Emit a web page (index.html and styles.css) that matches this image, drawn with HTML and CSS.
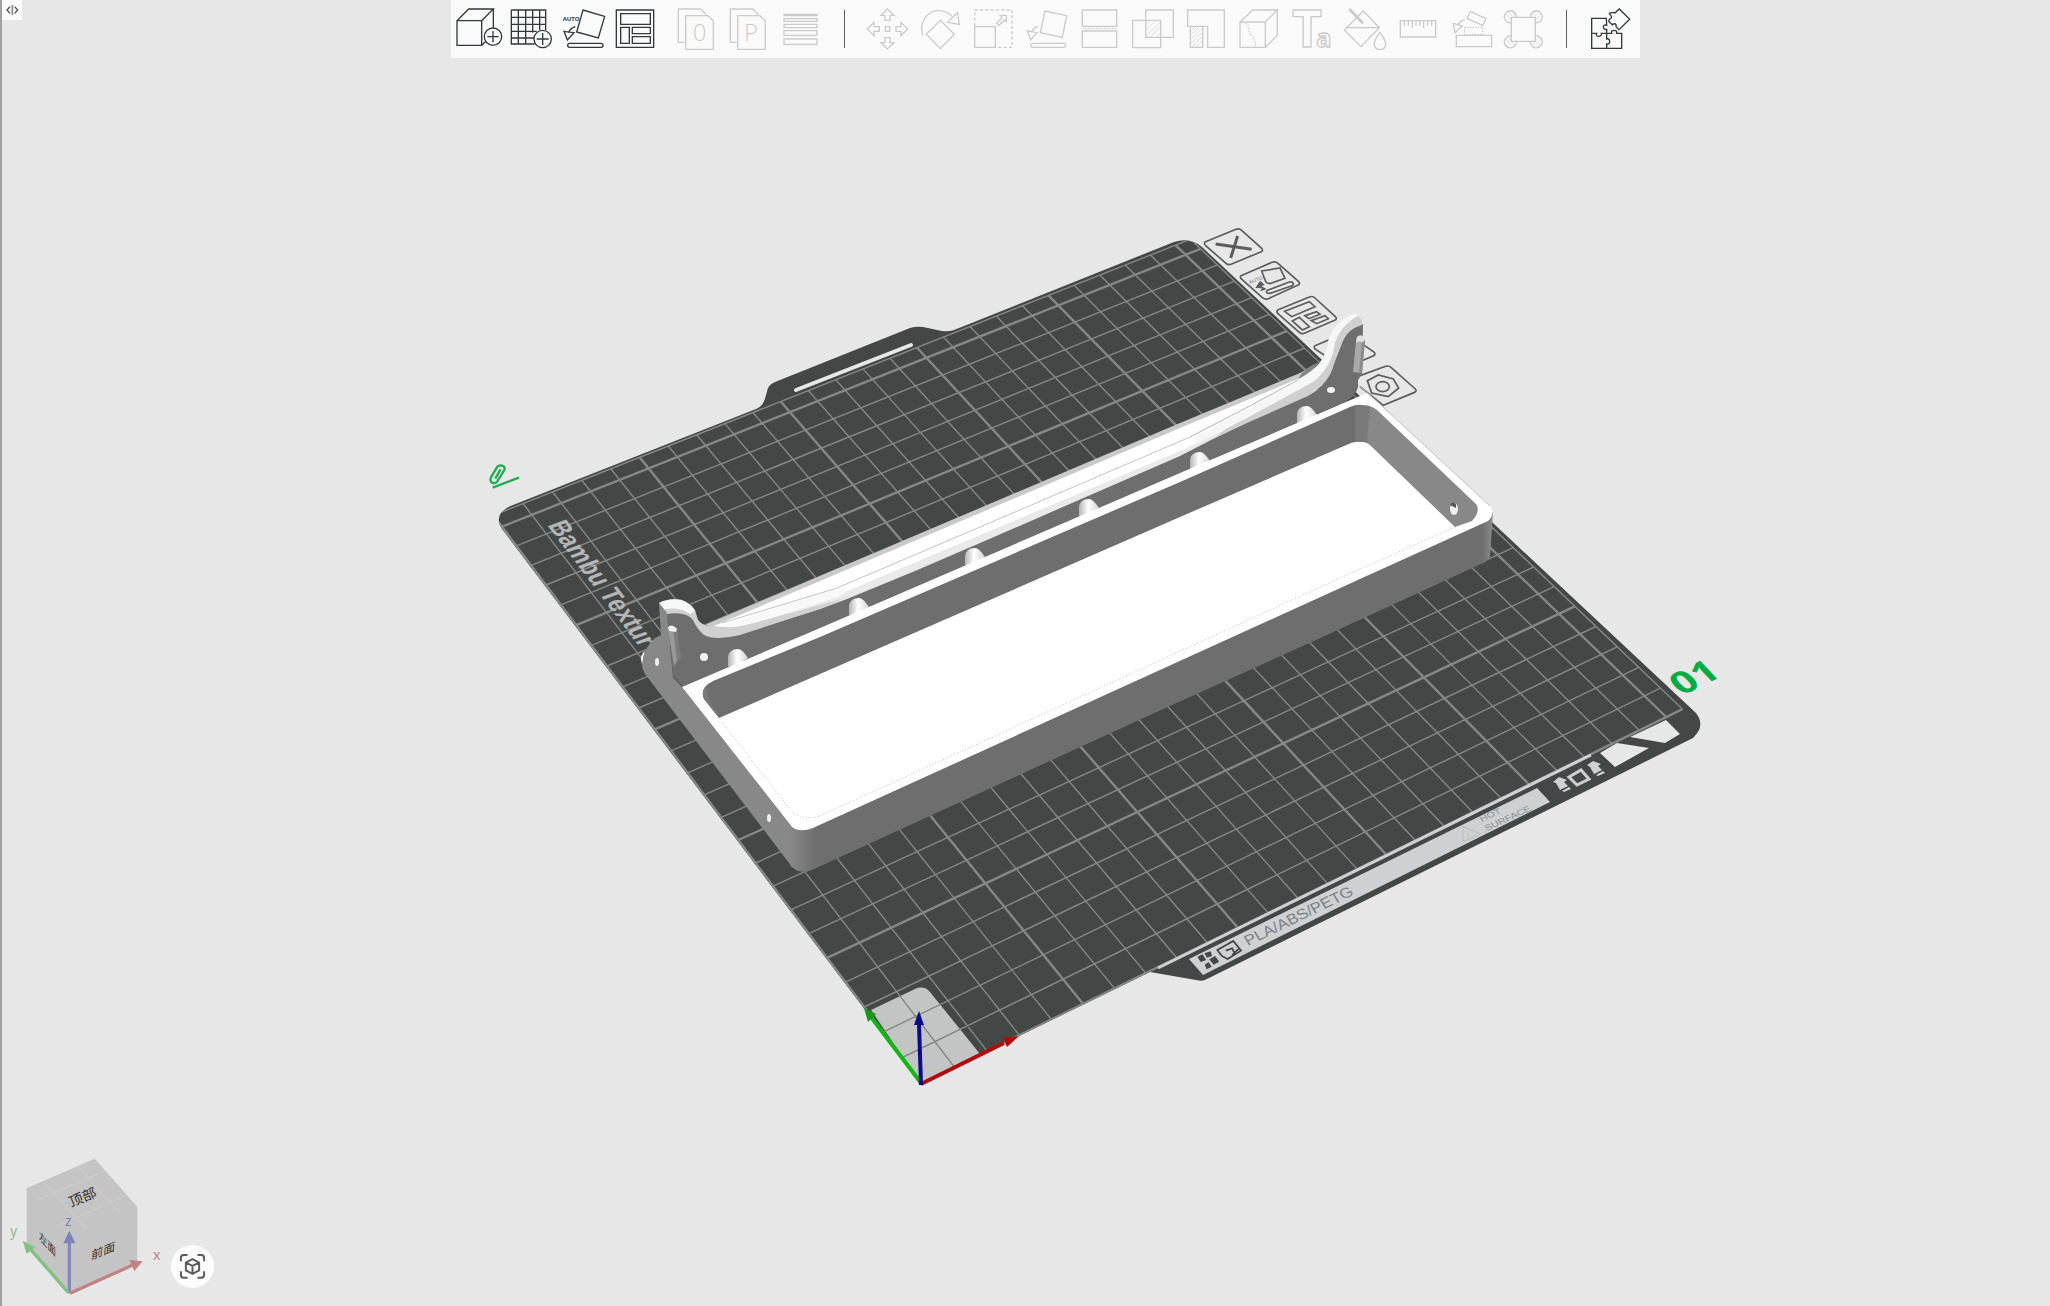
FILE: index.html
```html
<!DOCTYPE html>
<html lang="zh-CN">
<head>
<meta charset="utf-8">
<title>Bambu Studio</title>
<link rel="stylesheet" href="styles.css">
</head>
<body>
<main class="viewport">
<svg class="scene" viewBox="0 0 2050 1306" role="img" aria-label="Build plate">
  <defs>
    <clipPath id="sheet"><path d="M921 1084L502 529Q496 520 501 513Q505 508 513 505L756 409Q764 406 766 395L768 388Q770 384 775 382L910 328Q916 326 923 327L942 331Q948 332 954 330L1174 242Q1190 237 1202 247L1320 358L1493 523L1618 640L1696 713Q1706 726 1693 738L1207 979Q1203 982 1196 980L1150 972Z"/></clipPath>
    <linearGradient id="peg"><stop offset="0" stop-color="#b5b5b5"/><stop offset=".45" stop-color="#fff"/><stop offset="1" stop-color="#d5d5d5"/></linearGradient>
    <linearGradient id="cornerL"><stop offset="0" stop-color="#888"/><stop offset="1" stop-color="#6e6e6e"/></linearGradient>
    <linearGradient id="cornerR"><stop offset="0" stop-color="#6e6e6e"/><stop offset="1" stop-color="#8c8c8c"/></linearGradient>
    <g id="pegShape"><path fill="url(#peg)" d="M-10 10V1Q-9-7 0-7Q4-7 10 2L-6 12Z"/></g>
  </defs>

  <!-- build sheet -->
  <path class="sheet" d="M921 1084L502 529Q496 520 501 513Q505 508 513 505L756 409Q764 406 766 395L768 388Q770 384 775 382L910 328Q916 326 923 327L942 331Q948 332 954 330L1174 242Q1190 237 1202 247L1320 358L1493 523L1618 640L1696 713Q1706 726 1693 738L1207 979Q1203 982 1196 980L1150 972Z"/>
  <path class="slot" d="M796 390L911 345"/>
  <path class="patch" d="M921 1084L871 1010L915 989Q924 985 930 992L980 1054Z"/>
  <g clip-path="url(#sheet)">
    <path class="grid thin" id="grid-thin"/>
    <path class="grid bold" id="grid-bold"/>
  </g>
  <text class="sheet-name" transform="matrix(.5 .66 -.94 .35 547 525)">Bambu Textur</text>

  <!-- front strip -->
  <path class="strip-line" d="M1158 968L1591 755"/>
  <path class="strip" d="M1189 959L1537 788L1550 802L1203 975Z"/>
  <path class="hole" d="M1600 753L1617 743L1649 748L1615 767ZM1630 737L1666 720L1680 734L1665 743Z"/>
  <g class="strip-mark">
    <path d="M1553 782L1559 777L1567 780L1564 782L1568 786L1560 790L1556 783ZM1562 791L1569 787L1571 789L1564 792ZM1587 765L1593 761L1601 764L1598 766L1602 770L1594 774L1590 767ZM1596 775L1603 771L1605 773L1598 776Z"/>
    <path class="strip-box" d="M1569 777L1581 770L1589 779L1577 785Z"/>
  </g>
  <g transform="translate(1150 640) scale(.37 .3333)">
    <path class="ink" d="M128 950L142 943L152 960L137 966ZM147 940L164 934L168 948L154 953ZM160 958L176 948L187 965L172 974ZM148 974L158 966L167 980L153 988Z"/>
    <path class="ink-line" d="M182 930L225 903L246 932L210 957L194 948ZM205 932L222 925L228 938M228 938L240 927M222 945L230 938"/>
    <path class="warn" d="M846 560L894 582L846 604ZM860 575V588"/>
  </g>
  <text class="strip-text" transform="matrix(.93 -.45 .5 .8 1248 946)">PLA/ABS/PETG</text>
  <text class="strip-small" transform="matrix(.95 -.44 .5 .7 1482 822)">HOT</text>
  <text class="strip-small" transform="matrix(.95 -.44 .5 .7 1487 831)">SURFACE</text>
  <text class="plate-no" transform="matrix(1.18 -.59 .78 .84 1682 696)">01</text>
  <g class="rename" transform="translate(480 440) scale(.3333)"><path d="M33 112L52 80Q60 74 70 78Q76 82 73 90L52 124Q46 132 36 128Q29 124 33 112ZM46 116L62 88M38 143L117 113"/></g>

  <!-- plate actions -->
  <g class="plate-tools" transform="translate(1180 210) scale(.3333)">
    <path d="M75 96L168 58Q178 54 185 61L245 115Q251 122 242 126L155 162Q145 167 138 160L76 106Q71 100 75 96Z"/>
    <path class="cross" d="M107 102L215 118M173 78L152 144"/>
    <path d="M183 197L276 157Q287 153 294 160L356 215Q362 222 353 226L265 266Q255 270 247 263L184 207Q179 201 183 197Z"/>
    <path d="M245 183L300 174L315 205L270 221Q258 220 256 212ZM262 241L328 216Q338 214 340 221Q340 227 332 229L270 250Q261 251 259 246Z"/>
    <path class="ink" d="M226 234L240 212L254 224L245 229L260 238L240 244L246 235Z"/>
    <text class="mini" transform="matrix(.9 -.36 .5 .8 210 222)">AUTO</text>
    <path d="M293 300L388 261Q398 257 405 264L466 320Q473 327 464 331L375 369Q366 374 358 367L294 311Q288 305 293 300Z"/>
    <path d="M314 304L388 275L405 290L335 320ZM337 333L358 322L388 350L367 360ZM375 317L410 305L420 313L387 326ZM394 332L435 317L445 326L410 341Z"/>
    <path d="M405 407L498 368L583 427Q588 434 579 438L492 475L404 416Q401 411 405 407ZM540 497L617 469Q627 466 634 473L706 537Q712 544 702 548L610 586L540 530"/>
    <path d="M562 512L595 495L640 507L656 534L625 560L575 549Z"/>
    <ellipse cx="608" cy="530" rx="20" ry="15"/>
  </g>

  <!-- rear bar and brackets -->
  <path fill="#c9c9c9" d="M705 625L820 576L1180 423L1300 373L1313 366L1320 385L1180 462L820 612L740 636Z"/>
  <path fill="#fff" d="M714 626L820 581L1180 428L1300 378L1316 380L1180 458L820 608L735 636Z"/>
  <path fill="#e9e9e9" d="M720 630L840 594L985 533L1180 451L1248 419L1310 386L1318 390L1246 427L1180 458L987 541L843 603L740 638Z"/>
  <path fill="#f8f8f8" d="M720 626L836 588L846 592L838 597L745 627L728 631Z"/>
  <path class="seam" d="M722 623L837 588L980 527L1190 437L1246 408L1298 380"/>
  <path fill="#6e6e6e" d="M667 613Q680 610 690 615Q694 620 697 628Q706 638 725 638L820 609L847 599L915 571L987 540L1180 456L1213 439L1247 422L1313 393Q1328 384 1331 367L1338 353L1343 340Q1350 327 1363 324L1362 374L1358 380V387Q1356 396 1345 402L820 628L683 687L673 676Z"/>
  <path fill="#d0d0d0" d="M659 603Q665 599 677 599Q688 600 695 610L698 620Q704 627 712 626Q735 629 750 624L845 598L820 609L740 635Q715 641 704 635Q697 629 693 620Q686 611 667 614Z"/>
  <path fill="#f8f8f8" d="M659 603Q669 598 680 600Q691 603 695 611L690 614Q680 607 664 609Z"/>
  <path fill="#858585" d="M1298 379Q1304 367 1320 362L1308 374Z"/>
  <path fill="#cfcfcf" d="M1298 380L1313 370Q1326 359 1328 342Q1332 322 1355 313L1362 320V325Q1347 329 1342 343L1334 364Q1329 384 1308 396L1247 423L1213 439L1250 410Z"/>
  <path fill="#f6f6f6" d="M1298 380L1313 370Q1326 359 1328 342Q1332 322 1355 313L1358 316Q1340 326 1335 343Q1332 367 1313 382L1247 418L1198 443L1192 438L1246 410Z"/>
  <path class="seam" d="M1190 437L1246 408L1298 380"/>
  <path fill="#a8a8a8" d="M1356 340Q1357 335 1361 336Q1365 337 1365 341L1362 373L1353 372Z"/>
  <path fill="#e0e0e0" d="M1357 337Q1361 333 1365 338L1364 343Q1360 340 1356 343Z"/>
  <path fill="#8b8b8b" d="M1362 343L1365 340L1362 373L1359 374Z"/>
  <ellipse fill="#f2f2f2" cx="1331" cy="390" rx="4" ry="3"/>
  <path fill="#888" d="M659 603L667 613L673 677L682 687L792 827L792 867L645 674Q641 668 642 661Q646 645 655 638L661 635Z"/>
  <path fill="#fff" d="M642 664Q639 655 645 651Q643 656 642 664Z"/>
  <path fill="#7c7c7c" d="M668 628Q673 624 677 629L681 658L674 666Z"/>
  <path fill="#999" d="M668 630L673 628L677 661L674 666Z"/>
  <path fill="#f0f0f0" d="M668 627Q672 623 677 629L676 632L669 631Z"/>
  <ellipse fill="#f2f2f2" cx="704" cy="657" rx="4" ry="4"/>
  <ellipse fill="#eee" cx="657" cy="662" rx="2" ry="4"/>
  <use href="#pegShape" x="738" y="656"/><use href="#pegShape" x="859" y="605"/><use href="#pegShape" x="975" y="555"/><use href="#pegShape" x="1089" y="506"/><use href="#pegShape" x="1200" y="459"/><use href="#pegShape" x="1307" y="413"/>

  <!-- tray -->
  <path fill="#6e6e6e" d="M792 827L813 828L1492 514L1490 557Q1488 562 1481 564L1316 640L1150 715L812 870Q800 875 792 867Z"/>
  <path fill="url(#cornerL)" d="M790 824L816 828V868Q800 876 790 865Z"/>
  <path fill="url(#cornerR)" d="M1482 520L1493 512L1490 557L1482 564Z"/>
  <path fill="#fff" d="M682 687L820 628L1180 473L1367 393L1490 506Q1496 513 1488 521L1360 579L813 828Q800 833 792 827Z"/>
  <path fill="#6e6e6e" d="M719 718L704 699Q699 688 713 681L820 637L1180 482L1350 407Q1357 404 1362 405V442Q1357 441 1351 443L1180 517L820 674Z"/>
  <path fill="#7a7a7a" d="M719 718L704 699Q701 692 706 686L710 703L718 713Z"/>
  <path fill="#888" d="M1361 405Q1371 405 1377 410L1476 504Q1481 511 1472 521L1455 527L1372 447Q1367 441 1358 441Z"/>
  <path fill="#7a7a7a" d="M1355 405L1370 406L1367 443Q1363 441 1355 442Z"/>
  <ellipse fill="#f0f0f0" cx="1454" cy="509" rx="4" ry="6"/>
  <path fill="#555" d="M1450 505Q1452 501 1456 504L1456 508Z"/>
  <ellipse fill="#eee" cx="769" cy="818" rx="2" ry="4"/>
  <path class="dots" d="M722 722L792 812Q803 821 820 816L1340 578L1455 527"/>
  <path class="seam" d="M1358 385L1370 395L1490 506"/>

  <!-- origin axes -->
  <path stroke="#b30a0a" stroke-width="4" d="M921 1084L1004 1043"/><path fill="#b30a0a" d="M1003 1038L1019 1036L1007 1047Z"/>
  <path stroke="#12b812" stroke-width="4" d="M921 1083L871 1017"/><path fill="#159a15" d="M864 1008L876 1014L868 1022Z"/>
  <path stroke="#0a0a8c" stroke-width="4" d="M921 1085L919 1024"/><path fill="#0a0a8c" d="M919 1011L924 1025H914Z"/>
</svg>

<button class="collapse" type="button" aria-label="Collapse"><svg viewBox="0 0 60 60"><path d="M24 20L15 30L24 40M38 20L47 30L38 40"/><path class="bar" d="M31 15V45"/></svg></button>

<nav class="toolbar" aria-label="Tools">
  <div class="group">
    <button type="button" aria-label="Add"><svg viewBox="39 0 159 174"><path d="M51 62H125V136H51ZM51 62L86 27H160L125 62M160 27V83M125 136L138 124"/><circle cx="159" cy="110" r="26"/><path d="M159 93V127M142 110H176"/></svg></button>
    <button type="button" aria-label="Add plate"><svg viewBox="198 0 159 174"><path d="M214 30H317V90M214 30V132H284M214 52H317M214 73H317M214 94H290M214 114H282M235 30V132M257 30V132M278 30V98M299 30V90"/><circle cx="308" cy="117" r="26"/><path d="M308 99V135M290 117H326"/></svg></button>
    <button type="button" aria-label="Auto orient"><svg viewBox="357 0 159 174"><path d="M429 30L494 49L475 114L410 96ZM406 80Q388 86 386 99M372 94L402 98L382 120Z"/><rect x="383" y="130" width="106" height="12" rx="6"/><text class="auto" x="368" y="63">AUTO</text></svg></button>
    <button type="button" aria-label="Arrange"><svg viewBox="516 0 159 174"><path d="M529 30H641V142H529ZM542 41H631V73H542ZM542 82H568V130H542ZM577 82H631V101H577ZM577 110H631V130H577Z"/></svg></button>
  </div>
  <div class="group">
    <button type="button" disabled aria-label="Split to objects"><svg viewBox="687 0 159 174"><path d="M736 127H715V27H782L799 44M737 47H804L820 63V148H737Z"/><text class="thin-letter" x="758" y="124">0</text></svg></button>
    <button type="button" disabled aria-label="Split to parts"><svg viewBox="846 0 159 174"><path d="M892 127H871V27H939L955 44M893 47H960L976 63V148H893Z"/><text class="thin-letter" x="912" y="124">P</text></svg></button>
    <button type="button" disabled aria-label="Variable layer height"><svg viewBox="1005 0 159 174"><path d="M1032 43H1131V47H1032ZM1032 56H1131V64H1032ZM1032 73H1131V83H1032ZM1032 92H1131V106H1032ZM1032 117H1131V133H1032Z"/></svg></button>
  </div>
  <span class="rule"></span>
  <div class="group">
    <button type="button" disabled aria-label="Move"><svg viewBox="63 0 159 174"><path d="M142 27L162 46H150V61H135V46H123ZM142 147L162 128H150V113H135V128H123ZM82 87L102 67V80H118V94H102V107ZM203 87L183 67V80H168V94H183V107ZM136 80H149V94H136Z"/></svg></button>
    <button type="button" disabled aria-label="Rotate"><svg viewBox="222 0 159 174"><path d="M301 61L343 103L301 146L259 103ZM248 106C235 62 268 31 296 32Q318 32 336 49M352 38L358 73L323 67Z"/></svg></button>
    <button type="button" disabled aria-label="Scale"><svg viewBox="381 0 159 174"><path d="M404 80H466V142H404ZM480 46H499V65L493 60L477 76L470 69L486 53Z"/><path stroke-dasharray="9 7" d="M404 78V30H516V142H468"/></svg></button>
    <button type="button" disabled aria-label="Place on face"><svg viewBox="540 0 159 174"><path d="M615 33L680 47L667 112L601 98ZM594 79Q578 84 576 96M562 93L591 98L572 120Z"/><rect x="572" y="130" width="105" height="12" rx="6"/></svg></button>
    <button type="button" disabled aria-label="Cut"><svg viewBox="699 0 159 174"><path d="M727 30H830V79H727ZM727 93H830V142H727Z"/><path stroke-dasharray="4 4" d="M727 86H830"/></svg></button>
    <button type="button" disabled aria-label="Boolean"><svg viewBox="858 0 159 174"><path d="M917 30H1000V112H917ZM878 61H962V143H878Z"/><path class="hatch" d="M917 75L930 62M917 92L947 62M917 109L962 64M931 112L962 81M948 112L962 98"/></svg></button>
    <button type="button" disabled aria-label="Supports"><svg viewBox="1017 0 159 174"><path d="M1043 30H1153V142H1103V79H1043ZM1051 79H1088V142H1051Z"/><path class="hatch" d="M1051 94L1066 79M1051 107L1079 79M1051 120L1088 83M1051 133L1088 96M1056 141L1088 109M1069 141L1088 122"/></svg></button>
    <button type="button" disabled aria-label="Seam"><svg viewBox="-24 0 159 174"><path d="M0 66H76V142H0ZM0 66L38 30H112L76 66M112 30V106L76 142"/><path stroke-dasharray="4 4" d="M18 70L26 80L28 98L38 110L46 126V140"/></svg></button>
    <button type="button" disabled aria-label="Text"><svg viewBox="135 0 159 174"><text class="outline-t" x="156" y="141">T<tspan class="outline-a" x="229">a</tspan></text></svg></button>
    <button type="button" disabled aria-label="Color painting"><svg viewBox="294 0 159 174"><path d="M370 33L418 83L363 140L313 90ZM320 83H418M420 97Q403 119 403 133Q405 149 420 149Q436 149 437 133Q436 119 420 97Z"/><path stroke-width="9" d="M328 27L369 70"/></svg></button>
    <button type="button" disabled aria-label="Measure"><svg viewBox="453 0 159 174"><path d="M481 62H587V111H481ZM493 62V77M505 62V77M517 62V84M528 62V77M540 62V77M551 62V84M563 62V77M575 62V77"/></svg></button>
    <button type="button" disabled aria-label="Assemble"><svg viewBox="612 0 159 174"><path d="M649 106H755V140H649ZM691 34L738 56L728 77L681 55ZM674 58Q658 65 653 74M640 70L667 78L645 98Z"/><path stroke-dasharray="4 4" d="M674 82H728V104H674Z"/></svg></button>
    <button type="button" disabled aria-label="Brim ears"><svg viewBox="771 0 159 174"><path d="M814 52H886V124H814ZM829 52A18 18 0 1 0 814 68M871 52A18 18 0 1 1 886 68M829 124A18 18 0 1 1 814 108M871 124A18 18 0 1 0 886 108"/><path class="hatch" d="M799 42L812 60M806 36L818 52M816 34L828 50M896 36L882 50M902 42L888 58M886 33L874 46M799 118L812 134M806 112L824 138M797 130L806 140M903 118L888 134M896 112L878 136M902 130L892 140"/></svg></button>
  </div>
  <span class="rule"></span>
  <div class="group">
    <button type="button" aria-label="Assembly view"><svg viewBox="1029 0 159 174"><path d="M1099 55H1055V100H1070C1064 112 1088 112 1084 100H1100V88C1088 92 1086 70 1100 76ZM1055 100V145H1100V132C1112 136 1112 112 1100 117V100M1100 145H1145V100H1130C1134 88 1110 88 1115 100H1100M1138 27L1169 58L1137 89L1128 80C1132 68 1116 70 1118 76L1106 64C1108 52 1120 56 1112 46L1108 40C1118 34 1126 42 1128 36Z"/></svg></button>
  </div>
</nav>

<div class="gizmo">
  <svg class="cube" viewBox="0 0 513 528">
    <path fill="#c4c4c4" d="M80 175L284 86L412 230V392L208 490L80 345Z"/>
    <path class="cube-grid" d="M110 212L315 122M178 285L384 194M137 160L258 297M235 110L361 252"/>
    <text class="face" transform="matrix(.95 -.4 .35 .9 213 232)">顶部</text>
    <text class="face" transform="matrix(.85 -.34 -.06 .84 273 389)">前面</text>
    <text class="face" transform="matrix(.6 .65 0 .8 117 327)">左面</text>
    <path stroke="#8686c0" stroke-width="10" d="M208 490V335"/><path fill="#8080bd" d="M208 302L226 340H190Z"/>
    <path stroke="#83c083" stroke-width="10" d="M205 488L92 358"/><path fill="#83c083" d="M68 332L106 352L80 371Z"/>
    <path stroke="#c08383" stroke-width="10" d="M210 490L396 406"/><path fill="#c08383" d="M428 394L388 390L403 423Z"/>
    <text class="axis" fill="#8080bd" x="195" y="289">z</text>
    <text class="axis" fill="#83c083" x="30" y="319">y</text>
    <text class="axis" fill="#c08383" x="459" y="390">x</text>
  </svg>
  <button class="fit" type="button" aria-label="Fit view"><svg viewBox="512 343 130 130"><path d="M542 392V381Q542 373 550 373H562M592 373H604Q612 373 612 381V392M612 422V434Q612 442 604 442H592M562 442H550Q542 442 542 434V422M577 386L597 396V420L577 430L557 420V396ZM557 396L577 406L597 396M577 406V430"/></svg></button>
</div>
</main>
<script src="grid.js"></script>
</body>
</html>
```
FILE: styles.css
```css
* { box-sizing: border-box; }
body { margin: 0; font-family: "Open Sans", "Noto Sans CJK SC", sans-serif; }
button { padding: 0; border: 0; background: none; display: block; }
.viewport {
  position: relative;
  display: grid;
  grid-template-columns: auto 1fr;
  grid-template-rows: auto 1fr;
  min-height: 100vh;
  background: #e7e7e7;
  border-left: 2px solid #a0a0a0;
  overflow: hidden;
}
.scene { position: absolute; left: -2px; top: 0; width: 100vw; height: 100%; }
.sheet { fill: #434746; }
.slot { stroke: #e7e7e7; stroke-width: 4; stroke-linecap: round; }
.patch { fill: #c3c5c4; }
.grid { fill: none; stroke: #858885; }
.thin { stroke-width: 1.4; }
.bold { stroke-width: 2.4; }
.sheet-name { font: bold 28px "Liberation Sans", sans-serif; fill: #b4b6b5; }
.strip-line { stroke: #cdd1d3; stroke-width: 3; }
.strip { fill: #cdd1d3; }
.hole { fill: #e7e7e7; }
.strip-mark { fill: #cdd1d3; }
.strip-box { fill: none; stroke: #cdd1d3; stroke-width: 3; }
.ink { fill: #434746; }
.ink-line { fill: none; stroke: #434746; stroke-width: 5; }
.warn { fill: none; stroke: #b0b4b5; stroke-width: 2; }
.strip-text { font: 16px "Liberation Sans", sans-serif; fill: #7d8182; }
.strip-small { font: 10px "Liberation Sans", sans-serif; fill: #8c9091; }
.plate-no { font: bold 30px "Open Sans", sans-serif; fill: #00ae42; }
.rename path { fill: none; stroke: #1fae54; stroke-width: 7; }
.plate-tools { fill: none; stroke: #5c5c5c; stroke-width: 5; }
.plate-tools .cross { stroke-width: 9; }
.plate-tools .ink { fill: #5c5c5c; stroke: none; }
.mini { font: 16px "Liberation Sans", sans-serif; fill: #777; stroke: none; }
.seam { fill: none; stroke: #c4c4c4; stroke-width: 1; }
.dots { fill: none; stroke: #c0c0c0; stroke-width: 1; stroke-dasharray: 1 2; }

.collapse { position: relative; width: 20px; height: 20px; background: #fafafa; }
.collapse svg { display: block; width: 20px; height: 20px; fill: none; stroke: #4a4f50; stroke-width: 4; }
.collapse .bar { stroke: #8a8a8a; stroke-width: 5; }

.toolbar {
  position: relative;
  display: flex;
  align-items: center;
  justify-self: center;
  gap: 4px;
  height: 58px;
  padding: 0 4px 0 2px;
  margin-left: 19px;
  background: #fafafa;
}
.group { display: flex; }
.rule { width: 1px; height: 38px; margin: 0 12px; background: #5c6060; }
.toolbar svg { display: block; width: 53px; height: 58px; fill: none; stroke: #303a3c; stroke-width: 4; overflow: visible; }
.toolbar :disabled svg { stroke: #cbcbcb; }
.toolbar .hatch { stroke-width: 2; }
.toolbar text { stroke: none; fill: #303a3c; }
.toolbar .auto { font: bold 18px "Open Sans", sans-serif; }
.toolbar .thin-letter { font: 300 72px "Open Sans", sans-serif; fill: #cbcbcb; }
.toolbar .outline-t { font: bold 156px "Open Sans", sans-serif; fill: none; stroke: #cbcbcb; }
.toolbar .outline-a { font-size: 76px; fill: #fafafa; }

.gizmo { position: relative; grid-column: 1 / -1; align-self: end; justify-self: start; display: flex; align-items: flex-end; margin-left: -2px; }
.cube { display: block; width: 171px; height: 176px; }
.cube-grid { fill: none; stroke: #d2d2d2; stroke-width: 2; }
.face { font: 42px "Noto Sans CJK SC", sans-serif; fill: #333; }
.axis { font: 42px "Noto Sans", sans-serif; }
.fit { width: 43px; height: 43px; margin-bottom: 18px; border-radius: 50%; background: #fcfcfc; }
.fit svg { display: block; width: 43px; height: 43px; fill: none; stroke: #5c5c5c; stroke-width: 6; }
```
FILE: grid.js
```js
// Bed coordinates (mm) to the camera's screen position.
function project(x, y) {
  const u = x / 250, v = y / 250;
  const w = 1 + 0.10706 * u + 0.1647 * v;
  return ((923 * u - 337 * v + 921.7) / w).toFixed(1) + " " +
         ((-289.5 * u - 469.85 * v + 1083.3) / w).toFixed(1);
}

const SIZE = 256;
let thin = "", bold = "";
for (let i = 0; i <= 250; i += 10) {
  const d = "M" + project(i, 0) + "L" + project(i, SIZE) +
            "M" + project(0, i) + "L" + project(SIZE, i);
  if (i % 50 === 0) bold += d; else thin += d;
}
thin += "M" + project(0, SIZE) + "L" + project(SIZE, SIZE) + "L" + project(SIZE, 0);
document.getElementById("grid-thin").setAttribute("d", thin);
document.getElementById("grid-bold").setAttribute("d", bold);
```
